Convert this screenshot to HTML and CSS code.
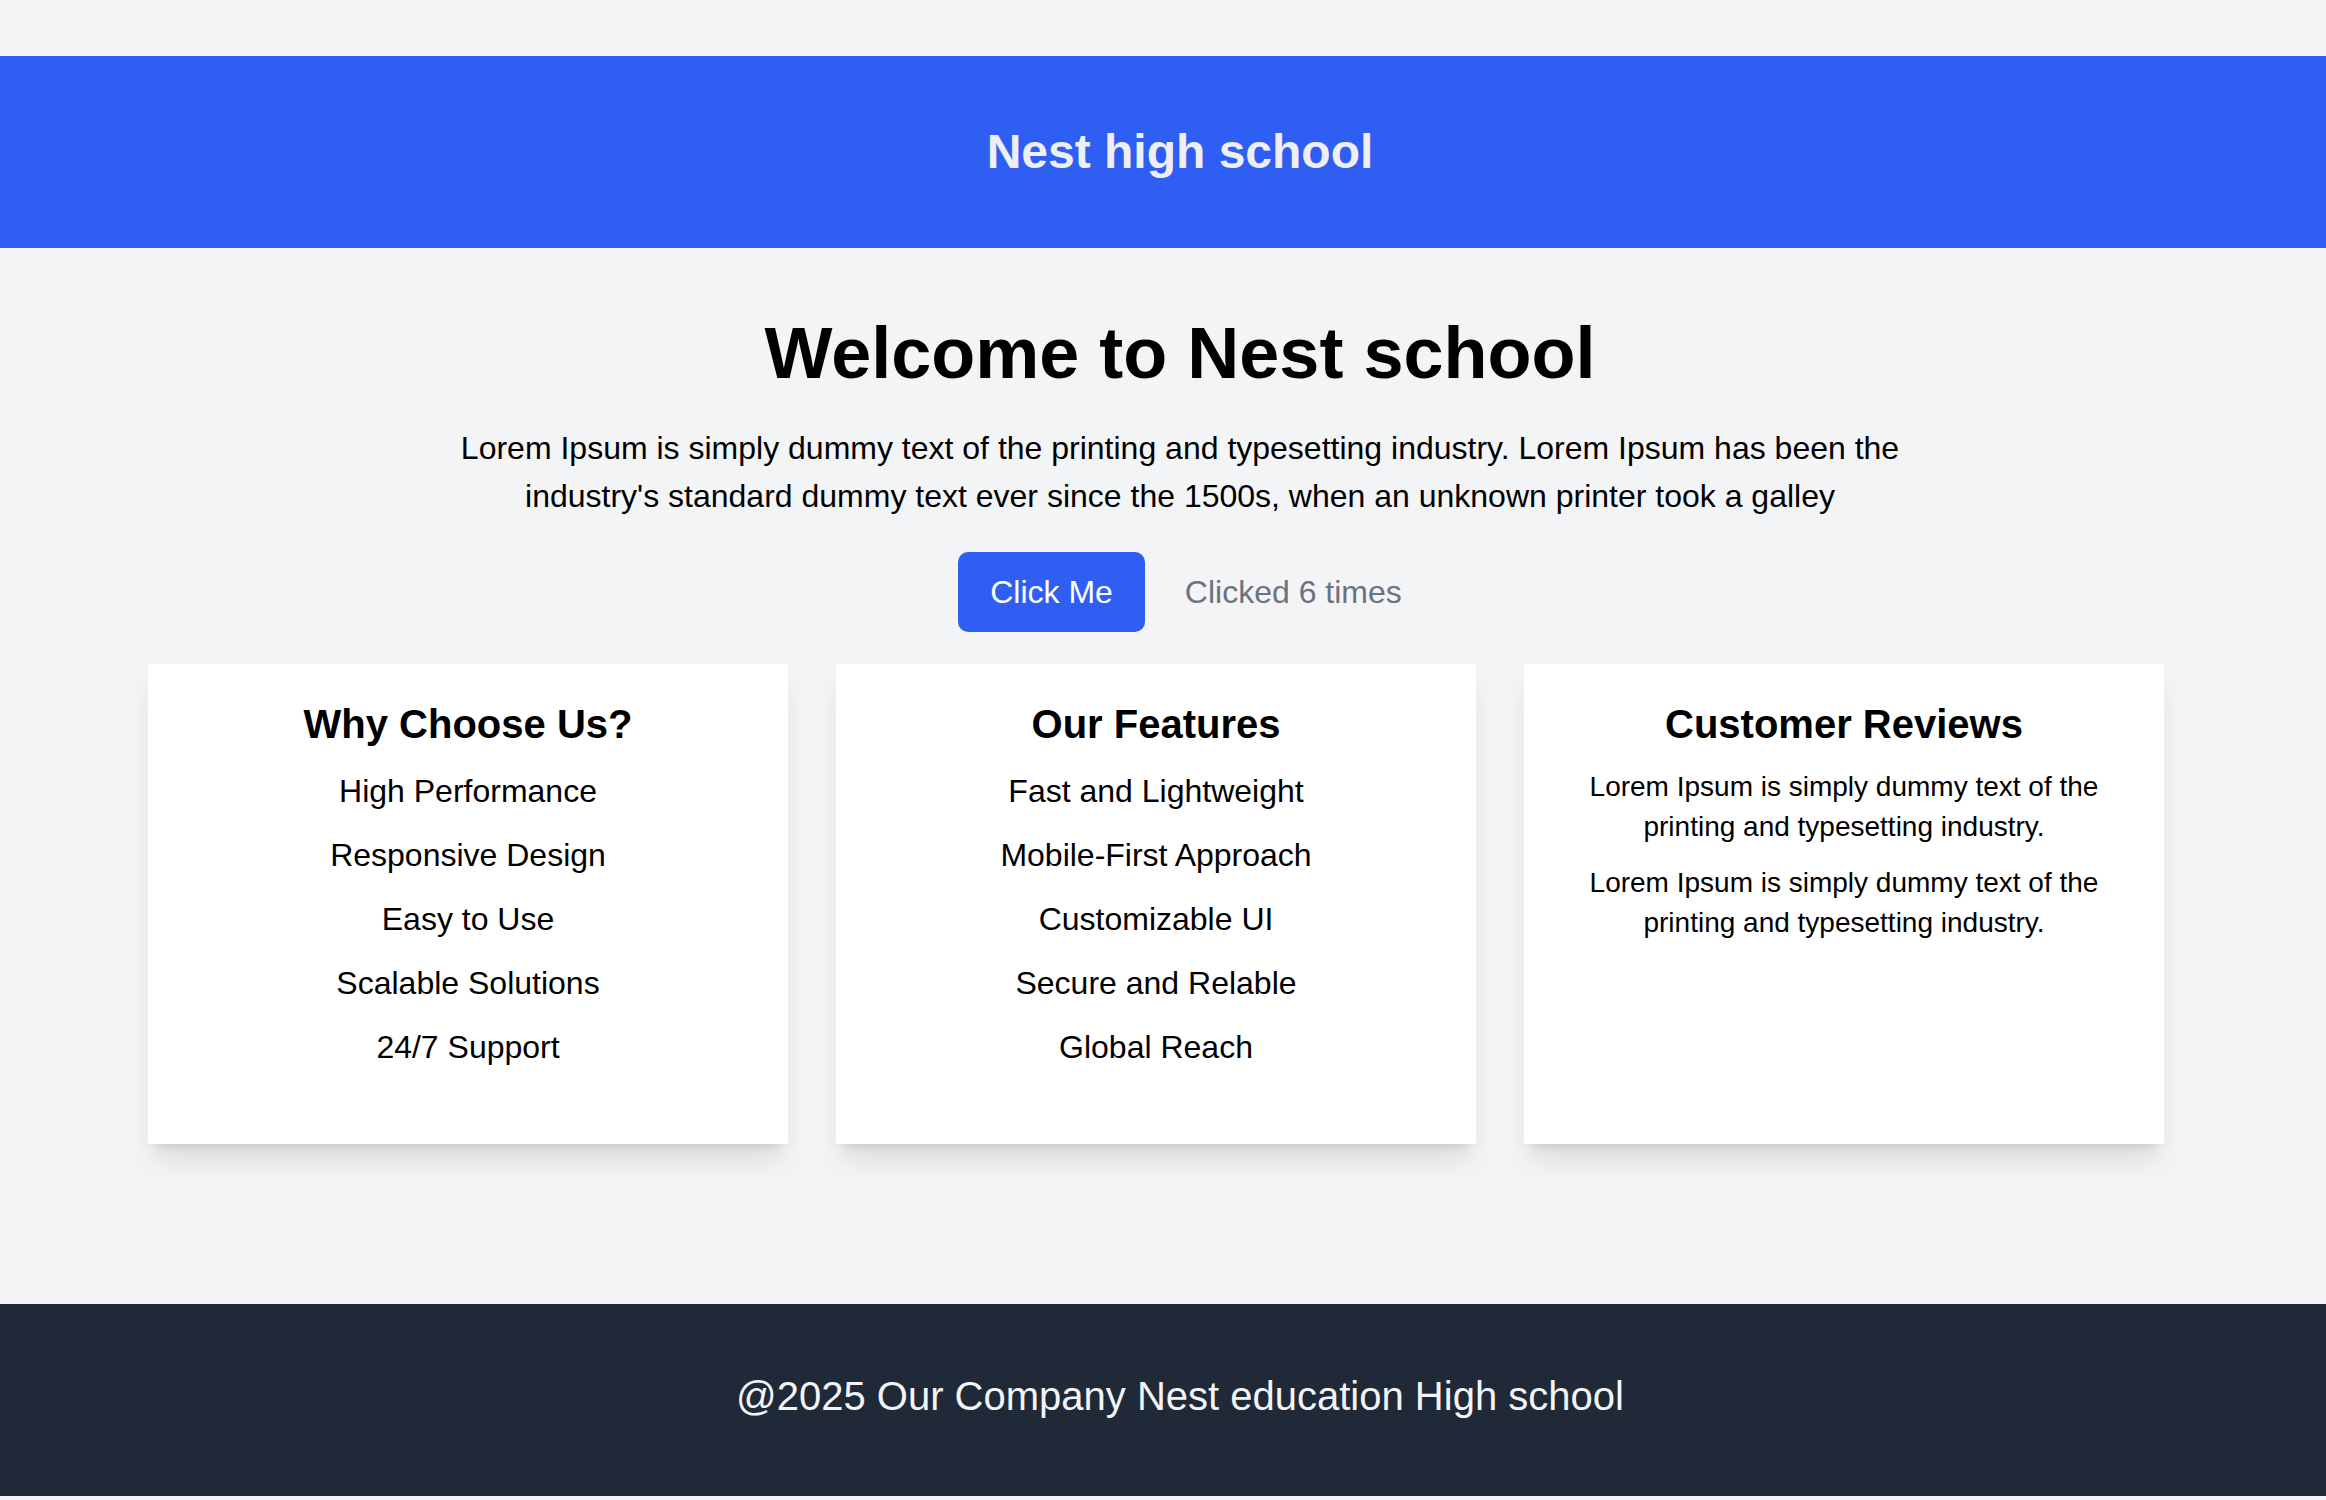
FILE: index.html
```html
<!DOCTYPE html>
<html lang="en">
<head>
<meta charset="utf-8">
<title>Nest high school</title>
<link rel="stylesheet" href="styles.css">
</head>
<body>
<div class="page">
  <header class="site-header">
    <h1 class="site-title">Nest high school</h1>
  </header>
  <main class="main">
    <section class="intro">
      <h2 class="intro-title">Welcome to Nest school</h2>
      <p class="intro-text">Lorem Ipsum is simply dummy text of the printing and typesetting industry. Lorem Ipsum has been the industry's standard dummy text ever since the 1500s, when an unknown printer took a galley</p>
      <div class="actions">
        <button class="btn" type="button">Click Me</button>
        <span class="count">Clicked 6 times</span>
      </div>
    </section>
    <section class="cards">
      <div class="card">
        <h3 class="card-title">Why Choose Us?</h3>
        <ul class="card-list">
          <li>High Performance</li>
          <li>Responsive Design</li>
          <li>Easy to Use</li>
          <li>Scalable Solutions</li>
          <li>24/7 Support</li>
        </ul>
      </div>
      <div class="card">
        <h3 class="card-title">Our Features</h3>
        <ul class="card-list">
          <li>Fast and Lightweight</li>
          <li>Mobile-First Approach</li>
          <li>Customizable UI</li>
          <li>Secure and Relable</li>
          <li>Global Reach</li>
        </ul>
      </div>
      <div class="card">
        <h3 class="card-title">Customer Reviews</h3>
        <p class="review">Lorem Ipsum is simply dummy text of the printing and typesetting industry.</p>
        <p class="review">Lorem Ipsum is simply dummy text of the printing and typesetting industry.</p>
      </div>
    </section>
  </main>
  <footer class="site-footer">
    <p class="footer-text">@2025 Our Company Nest education High school</p>
  </footer>
</div>
</body>
</html>
```

FILE: styles.css
```css
* {
  box-sizing: border-box;
}

html, body {
  margin: 0;
  padding: 0;
}

body {
  background: #f3f4f6;
  font-family: "Liberation Sans", Arial, sans-serif;
  color: #000;
}

.page {
  padding-top: 56px;
  padding-bottom: 4px;
}

.site-header {
  background: #2f5ef3;
  padding: 72px 0 72px 34px;
  text-align: center;
}

.site-title {
  margin: 0;
  font-size: 48px;
  line-height: 48px;
  font-weight: 700;
  color: #eeeff3;
}

.main {
  padding: 65px 0 160px;
}

.intro {
  padding-left: 34px;
  text-align: center;
}

.intro-title {
  margin: 0;
  font-size: 72px;
  line-height: 80px;
  font-weight: 700;
}

.intro-text {
  max-width: 1500px;
  margin: 31px auto 0;
  font-size: 32px;
  line-height: 48px;
}

.actions {
  display: flex;
  justify-content: center;
  align-items: center;
  gap: 40px;
  margin-top: 32px;
}

.btn {
  border: none;
  background: #2f5ef3;
  color: #fff;
  font-family: "Liberation Sans", Arial, sans-serif;
  font-size: 32px;
  line-height: 48px;
  padding: 16px 32px;
  border-radius: 10px;
  cursor: pointer;
}

.count {
  font-size: 32px;
  line-height: 48px;
  color: #6b7280;
}

.cards {
  display: flex;
  gap: 48px;
  margin-top: 32px;
  padding-left: 148px;
}

.card {
  display: flex;
  flex-direction: column;
  width: 640px;
  height: 480px;
  background: #fff;
  padding: 34px 32px 32px;
  text-align: center;
  box-shadow: 0 20px 25px -5px rgba(0, 0, 0, 0.1), 0 8px 10px -6px rgba(0, 0, 0, 0.1);
}

.card-title {
  margin: 0 0 8px;
  font-size: 40px;
  line-height: 53px;
  font-weight: 700;
}

.card-list {
  list-style: none;
  margin: 0;
  padding: 0;
}

.card-list li {
  font-size: 32px;
  line-height: 48px;
  padding: 8px 0;
}

.review {
  margin: 8px 0 0;
  font-size: 28px;
  line-height: 40px;
}

.review + .review {
  margin-top: 16px;
}

.site-footer {
  background: #1f2937;
  padding: 68px 0 76px 34px;
  text-align: center;
}

.footer-text {
  margin: 0;
  font-size: 40px;
  line-height: 48px;
  color: #f3f4f6;
}
```
